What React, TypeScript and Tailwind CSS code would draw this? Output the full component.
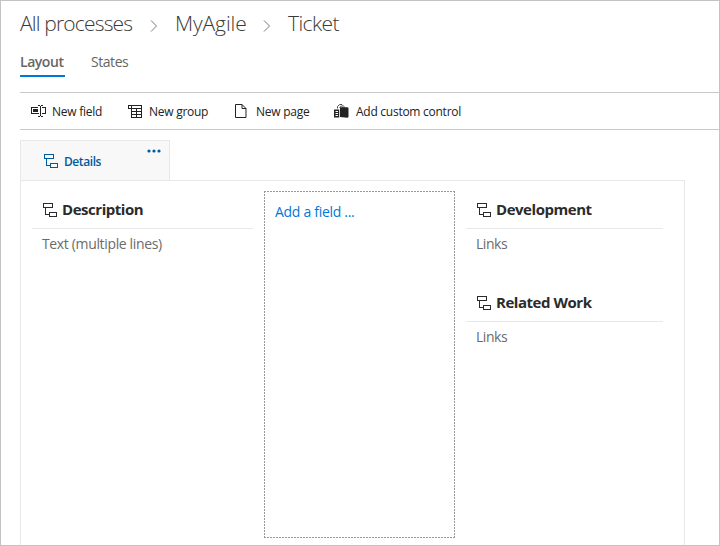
import React from "react";

function GroupIcon({ className }: { className: string }) {
  return (
    <svg width="15" height="14" viewBox="0 0 15 14" fill="none" stroke="currentColor" shapeRendering="crispEdges" className={className}>
      <path d="M0.5 0.5h9v4h-9zM2.5 5v6.5H6M6.500 9.500h7v4h-7z" />
    </svg>
  );
}

function FieldIcon() {
  return (
    <svg width="15" height="12" viewBox="0 0 15 12" fill="none" stroke="#222" shapeRendering="crispEdges">
      <path d="M7 2.500H.5v6h7M11 2.500h3v6h-3M9.500 1v10M7 .5h2M10 .5h2M7 11.500h2M10 11.500h2" />
      <path d="M2 4h5v3H2z" fill="#222" stroke="none" />
    </svg>
  );
}

function TableIcon() {
  return (
    <svg width="15" height="13" viewBox="0 0 15 13" fill="none" stroke="#222" shapeRendering="crispEdges">
      <path d="M.5.5h13v3H.5zM3.500.5v12h10v-9M8.500 3v9M3.500 6.500h10M3.500 9.500h10" />
    </svg>
  );
}

function PageIcon() {
  return (
    <svg width="12" height="14" viewBox="0 0 12 14" fill="none" stroke="#222">
      <path d="M.5.5h6.500l4 4v9H.5zM7 .5v4h4" />
    </svg>
  );
}

function ControlIcon() {
  return (
    <svg width="15" height="14" viewBox="0 0 15 14">
      <path d="M3.500 4.500V2.500L5.500.6h2.500l2 2V4M5.500 3.500l2-1.300 1.500 1.300" fill="none" stroke="#444" />
      <path d="M6 3.300h7.500L14.500 4v9l-1 .8L6 13zM0 5.500h5.200v8H0z" fill="#222" />
      <path d="M1.500 7.500h2.500M1.500 9.500h2.500M1.500 11.500h2.500" stroke="#fff" />
    </svg>
  );
}

function Chevron() {
  return (
    <svg width="8" height="12" viewBox="0 0 8 12" fill="none" stroke="#777" className="mt-[3px]">
      <path d="M1 .5 6.500 6 1 11.500" />
    </svg>
  );
}

function Group({ title, field, spacing }: { title: string; field: string; spacing: string }) {
  return (
    <section className="h-[93px]">
      <h2 className="flex h-[38px] items-center border-b border-[#e8e8e8] pl-[11px] text-[#2b2b2b]">
        <GroupIcon className="mr-[4px] shrink-0" />
        <span className="text-[15px] font-bold tracking-[-0.46px]">{title}</span>
      </h2>
      <p className={`flex h-[30px] items-center pl-[10px] text-[14px] leading-[20px] text-[#6b6b6b] ${spacing}`}>{field}</p>
    </section>
  );
}

export default function App() {
  return (
    <main className="h-[546px] w-[720px] overflow-hidden whitespace-nowrap border border-[#c3c3c3] bg-white pl-[19px] font-['Open_Sans','Noto_Sans',sans-serif] text-[#222]">
      <nav className="flex h-[46px] items-center text-[21px] font-light text-[#3a3a3a]">
        <span className="w-[130px] tracking-[-0.82px]">All processes</span>
        <Chevron />
        <span className="ml-[17px] w-[88px] tracking-[-0.1px]">MyAgile</span>
        <Chevron />
        <span className="ml-[17px] tracking-[-0.6px]">Ticket</span>
      </nav>
      <div className="flex h-[45px] items-start text-[14px] text-[#666]">
        <div className="flex h-[30px] w-[45px] items-center border-b-2 border-[#0078d7] font-semibold tracking-[-0.45px]">Layout</div>
        <div className="ml-[26px] flex h-[28px] items-center tracking-[-0.45px]">States</div>
      </div>
      <div className="flex h-[38px] items-center border-y border-[#c8c8c8] text-[12px] tracking-[-0.26px]">
        <div className="flex w-[98px] items-center pl-[11px]"><FieldIcon /><span className="ml-[6px] pt-px">New field</span></div>
        <div className="flex w-[107px] items-center pl-[10px]"><TableIcon /><span className="ml-[6px] pt-px">New group</span></div>
        <div className="flex w-[100px] items-center pl-[10px]"><PageIcon /><span className="ml-[9px] pt-px">New page</span></div>
        <div className="flex items-center pl-[9px]"><ControlIcon /><span className="ml-[7px] pt-px">Add custom control</span></div>
      </div>
      <div className="mt-[10px] flex h-10 w-[150px] border border-b-0 border-[#e8e8e8] bg-[#f8f8f8] pl-[23px] text-[#005a9e]">
        <GroupIcon className="mt-[13px]" />
        <span className="ml-[5px] mt-[12px] text-[12px] font-semibold leading-[18px] tracking-[-0.42px]">Details</span>
        <svg width="14" height="4" viewBox="0 0 14 4" fill="currentColor" className="ml-auto mr-[8px] mt-[8px]">
          <circle cx="2" cy="2" r="1.600" /><circle cx="7" cy="2" r="1.600" /><circle cx="12" cy="2" r="1.600" />
        </svg>
      </div>
      <div className="flex h-[366px] w-[665px] border border-b-0 border-[#e8e8e8] pl-[11px] pt-[10px]">
        <div className="w-[221px]"><Group title="Description" field="Text (multiple lines)" spacing="tracking-[-0.35px]" /></div>
        <div className="ml-[11px] h-[347px] w-[191px] bg-[image:repeating-linear-gradient(90deg,#999_0_2px,transparent_2px_3px),repeating-linear-gradient(90deg,#999_0_2px,transparent_2px_3px),repeating-linear-gradient(180deg,#999_0_2px,transparent_2px_3px),repeating-linear-gradient(180deg,#999_0_2px,transparent_2px_3px)] bg-[size:100%_1px,100%_1px,1px_100%,1px_100%] bg-[position:0_0,0_100%,0_0,100%_0] bg-no-repeat pl-[11px] pt-[11px] text-[14px] leading-[20px] tracking-[-0.3px] text-[#0078d7]">Add a field ...</div>
        <div className="ml-[11px] w-[197px]">
          <Group title="Development" field="Links" spacing="tracking-[-0.45px]" />
          <Group title="Related Work" field="Links" spacing="tracking-[-0.45px]" />
        </div>
      </div>
    </main>
  );
}
